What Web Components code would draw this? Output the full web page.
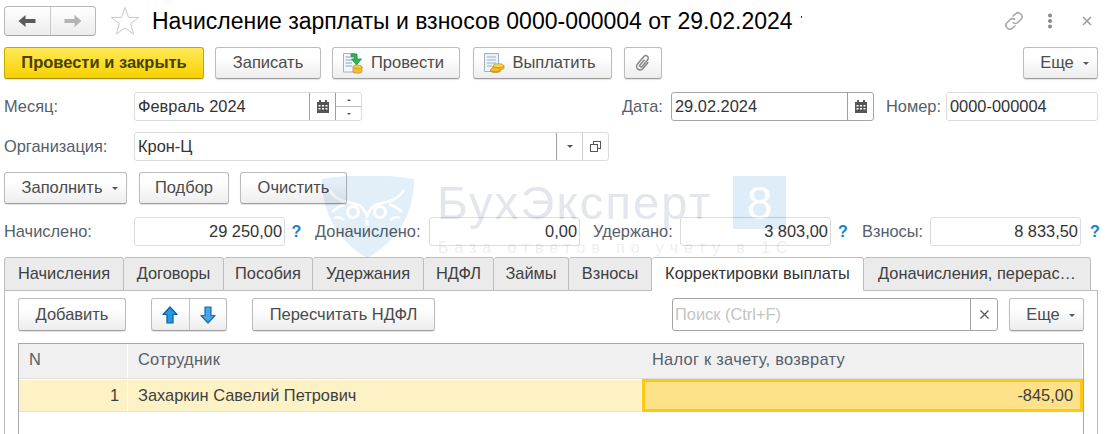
<!DOCTYPE html>
<html lang="ru">
<head>
<meta charset="utf-8">
<title>Начисление зарплаты и взносов</title>
<style>
  html, body { margin: 0; padding: 0; background: #fff; overflow: hidden; }
  body { font-family: "Liberation Sans", Arial, sans-serif; font-size: 16.4px; color: #4b4b4b; }
</style>
</head>
<body>

<form-window>
  <title-bar>Начисление зарплаты и взносов 0000-000004 от 29.02.2024</title-bar>

  <form-row h="32" top="0">
    <cmd-button primary w="200">Провести и закрыть</cmd-button>
    <cmd-button w="106" gap="11">Записать</cmd-button>
    <cmd-button w="128" gap="11" icon="post">Провести</cmd-button>
    <cmd-button w="139" gap="13" icon="pay">Выплатить</cmd-button>
    <cmd-button w="38" gap="12" icon="clip"></cmd-button>
    <cmd-button w="75" push menu>Еще</cmd-button>
  </form-row>

  <form-row h="29" top="13">
    <form-label w="130">Месяц:</form-label>
    <input-field w="228" value="Февраль 2024" actions="calendar spin"></input-field>
    <form-label gap="260" w="49">Дата:</form-label>
    <input-field w="203" dark value="29.02.2024" actions="calendar"></input-field>
    <form-label gap="12" w="60">Номер:</form-label>
    <input-field w="152" value="0000-000004"></input-field>
  </form-row>

  <form-row h="29" top="11">
    <form-label w="130">Организация:</form-label>
    <input-field w="475" value="Крон-Ц" actions="drop open"></input-field>
  </form-row>

  <form-row h="32" top="11">
    <cmd-button w="123" menu>Заполнить</cmd-button>
    <cmd-button w="90" gap="12">Подбор</cmd-button>
    <cmd-button w="107" gap="11">Очистить</cmd-button>
  </form-row>

  <form-row h="29" top="13">
    <form-label w="130">Начислено:</form-label>
    <input-field w="151" right value="29 250,00"></input-field>
    <help-mark w="23"></help-mark>
    <form-label gap="7" w="114">Доначислено:</form-label>
    <input-field w="151" right value="0,00"></input-field>
    <form-label gap="13" w="87">Удержано:</form-label>
    <input-field w="151" right value="3 803,00"></input-field>
    <help-mark w="24"></help-mark>
    <form-label gap="7" w="68">Взносы:</form-label>
    <input-field w="151" right value="8 833,50"></input-field>
    <help-mark w="28"></help-mark>
  </form-row>

  <tab-strip>
    <tab-item w="120">Начисления</tab-item>
    <tab-item w="100">Договоры</tab-item>
    <tab-item w="89">Пособия</tab-item>
    <tab-item w="111">Удержания</tab-item>
    <tab-item w="70">НДФЛ</tab-item>
    <tab-item w="75">Займы</tab-item>
    <tab-item w="83">Взносы</tab-item>
    <tab-item w="212" active>Корректировки выплаты</tab-item>
    <tab-item w="227">Доначисления, перерас…</tab-item>
  </tab-strip>

  <tab-panel>
    <form-row h="33" top="0" flush>
      <cmd-button w="108">Добавить</cmd-button>
      <arrow-group></arrow-group>
      <cmd-button w="183" gap="25">Пересчитать НДФЛ</cmd-button>
      <input-field w="326" gap="237" dark placeholder="Поиск (Ctrl+F)" actions="clear"></input-field>
      <cmd-button w="75" gap="11" menu>Еще</cmd-button>
    </form-row>
    <data-grid></data-grid>
  </tab-panel>

  <brand-mark></brand-mark>
</form-window>

<script>
const ICONS = {
  back: `<svg width="18" height="14" viewBox="0 0 18 14"><path d="M0.5 7 7.5 1V5H17.5V9H7.5V13Z" fill="#5a5a5a"/></svg>`,
  forward: `<svg width="18" height="14" viewBox="0 0 18 14"><path d="M17.5 7 10.5 1V5H0.5V9H10.5V13Z" fill="#b4b4b4"/></svg>`,
  star: `<svg width="30" height="30" viewBox="0 0 30 30"><path d="M15 1.5 18.6 11.4H28.8L20.7 17.7 23.6 28 15 21.9 6.400 28 9.300 17.700 1.200 11.400H11.400Z" fill="#fff" stroke="#c8c8c8" stroke-width="1"/></svg>`,
  link: `<svg width="20" height="20" viewBox="0 0 20 20" fill="none" stroke="#a9a9a9" stroke-width="1.600"><path d="M8.500 5.500 11.500 2.800C13 1.400 15.300 1.500 16.800 3 18.300 4.500 18.400 6.800 17 8.300L14 11.300C12.500 12.800 10.200 12.800 8.800 11.300"/><path d="M11.500 14.500 8.500 17.200C7 18.600 4.700 18.500 3.200 17 1.700 15.500 1.600 13.200 3 11.700L6 8.700C7.500 7.200 9.800 7.200 11.200 8.700"/></svg>`,
  dots: `<svg width="6" height="16" viewBox="0 0 6 16" fill="#8a8a8a"><circle cx="3" cy="2.500" r="2"/><circle cx="3" cy="8" r="2"/><circle cx="3" cy="13.500" r="2"/></svg>`,
  close: `<svg width="10" height="10" viewBox="0 0 10 10" stroke="#9a9a9a" stroke-width="1.500"><path d="M1 1 9 9M9 1 1 9"/></svg>`,
  calendar: `<svg width="12" height="13" viewBox="0 0 12 13"><path d="M0 2H12V13H0Z" fill="#555"/><path d="M2 0H4V3H2ZM8 0H10V3H8Z" fill="#555"/><path d="M1.500 5H3.500V6.500H1.500ZM5 5H7V6.500H5ZM8.500 5H10.500V6.500H8.500ZM1.500 8H3.500V9.500H1.500ZM5 8H7V9.500H5ZM8.500 8H10.500V9.500H8.500Z" fill="#fff"/></svg>`,
  clear: `<svg width="9" height="9" viewBox="0 0 9 9" stroke="#555" stroke-width="1.200"><path d="M.5 .5 8.500 8.500M8.500 .5 .5 8.500"/></svg>`,
  open: `<svg width="11" height="11" viewBox="0 0 11 11" fill="#fff" stroke="#555"><rect x="3.500" y=".5" width="7" height="7"/><rect x=".5" y="3.500" width="7" height="7"/></svg>`,
  clip: `<svg width="18" height="20" viewBox="0 0 18 20" fill="none" stroke="#858585" stroke-width="1.500"><path transform="rotate(40 9 10)" d="M12.500 6V14.500A3.500 3.500 0 0 1 5.500 14.500V4.500A2.500 2.500 0 0 1 10.500 4.500V13.500A1 1 0 0 1 8 13.500V6.500"/></svg>`,
  post: `<svg width="22" height="22" viewBox="0 0 22 22"><path d="M1.500 1.500H13L15 4V20H1.500Z" fill="#f4f7fb" stroke="#9fb0c4"/><path d="M3.500 5H11M3.500 8H10M3.500 11H10M3.500 14H10" stroke="#8ea2b8"/><path d="M9 2H15V7H19.500L14.500 13 9.500 7H12V4.500H9Z" fill="#2fb457" stroke="#1c8a3c" stroke-width=".7"/><ellipse cx="15.500" cy="15" rx="4.500" ry="2" fill="#f7cf4a" stroke="#c3941c" stroke-width=".7"/><path d="M11 15V20C11 21.500 20 21.500 20 20V15C20 16.600 11 16.600 11 15Z" fill="#f1bd32" stroke="#c3941c" stroke-width=".7"/></svg>`,
  pay: `<svg width="22" height="22" viewBox="0 0 22 22"><path d="M1.500 1.500H15.500V19.500H1.500Z" fill="#eef2f7" stroke="#9fb0c4"/><path d="M4 5H13M4 8H13M4 11H13M4 14H9" stroke="#9db0c4"/><ellipse cx="15.500" cy="14" rx="5.500" ry="2.300" fill="#f8d35a" stroke="#c3941c" stroke-width=".7"/><path d="M10 14V16.500C10 18 21 18 21 16.500V14C21 16 10 16 10 14Z" fill="#efb62d" stroke="#c3941c" stroke-width=".7"/><ellipse cx="12.500" cy="18" rx="5" ry="2.300" fill="#f1bd32" stroke="#c3941c" stroke-width=".7"/><path d="M7.500 18V19C7.500 20.800 17.500 20.800 17.500 19V18C17.500 20 7.500 20 7.500 18Z" fill="#dfa324" stroke="#c3941c" stroke-width=".7"/></svg>`,
  up: `<svg width="16" height="18" viewBox="0 0 16 18"><path d="M8 1 15 8.500H11V17H5V8.500H1Z" fill="#1f9ae8" stroke="#0e5e94" stroke-width="1.200" stroke-linejoin="round"/></svg>`,
  down: `<svg width="16" height="18" viewBox="0 0 16 18"><path d="M8 17 15 9.500H11V1H5V9.500H1Z" fill="#4aa3e6" stroke="#1c6ba5" stroke-width="1.200" stroke-linejoin="round"/></svg>`
};

customElements.define('form-window', class extends HTMLElement {
  constructor() {
    super();
    this.attachShadow({ mode: 'open' });
    this.shadowRoot.innerHTML = `<style>
      :host { display: flex; flex-direction: column; position: relative; width: 1108px; height: 434px; overflow: hidden; }
    </style><slot></slot>`;
  }
});

customElements.define('title-bar', class extends HTMLElement {
  constructor() {
    super();
    this.attachShadow({ mode: 'open' });
    this.shadowRoot.innerHTML = `<style>
      :host { display: flex; align-items: center; height: 47px; flex: none; padding: 0 16px 5px 4px; box-sizing: border-box; }
      .nav { display: flex; width: 92px; height: 30px; box-sizing: border-box; border: 1px solid #b9b9b9; border-bottom-color: #a5a5a5; border-radius: 4px; background: linear-gradient(#fff, #ececec); }
      .nav div { flex: 1; display: flex; align-items: center; justify-content: center; }
      .nav div + div { border-left: 1px solid #c8c8c8; }
      .star { margin-left: 14px; display: flex; }
      .text { margin-left: 12px; font-size: 23px; line-height: 26px; color: #000; white-space: nowrap; margin-top: -1px; }
      .tick { width: 1px; height: 2px; background: #b00; margin: 0 0 8px 8px; }
      .tools { margin-left: auto; display: flex; align-items: center; }
      .tools .dots { margin-left: 23px; display: flex; }
      .tools .close { margin-left: 29px; display: flex; }
    </style>
    <div class="nav"><div>${ICONS.back}</div><div>${ICONS.forward}</div></div>
    <div class="star">${ICONS.star}</div>
    <div class="text"><slot></slot></div>
    <div class="tick"></div>
    <div class="tools">${ICONS.link}<div class="dots">${ICONS.dots}</div><div class="close">${ICONS.close}</div></div>`;
  }
});

customElements.define('form-row', class extends HTMLElement {
  constructor() {
    super();
    this.attachShadow({ mode: 'open' });
    this.shadowRoot.innerHTML = `<style>
      :host { display: flex; align-items: stretch; flex: none; box-sizing: border-box; padding: 0 10px 0 4px; }
      :host([flush]) { padding: 0; }
    </style><slot></slot>`;
  }
  connectedCallback() {
    this.style.height = this.getAttribute('h') + 'px';
    this.style.marginTop = this.getAttribute('top') + 'px';
  }
});

customElements.define('cmd-button', class extends HTMLElement {
  constructor() {
    super();
    this.attachShadow({ mode: 'open' });
  }
  connectedCallback() {
    const icon = this.getAttribute('icon');
    const hasText = this.textContent.trim() !== '';
    const caret = this.hasAttribute('menu') ? `<span class="caret"></span>` : '';
    this.shadowRoot.innerHTML = `<style>
      :host { display: flex; flex: none; box-sizing: border-box; align-items: center; justify-content: center; padding-bottom: 1px; border: 1px solid #bcbcbc; border-bottom-color: #a0a0a0; border-radius: 3px; background: linear-gradient(#fff 30%, #ededed); box-shadow: 0 1px 1px rgba(0,0,0,.12); color: #4b4b4b; font-size: 16.5px; white-space: nowrap; }
      :host([primary]) { border-color: #c9a800; border-bottom-color: #a98f00; background: linear-gradient(#ffe957, #f6d200); color: #4a4000; font-weight: bold; }
      :host([push]) { margin-left: auto; }
      :host([menu]) { padding-left: 8px; }
      :host([icon]) { padding-right: ${hasText ? '6px' : '0'}; }
      .icon { display: flex; margin-right: ${hasText ? '7px' : '0'}; }
      .caret { width: 0; height: 0; border: 3px solid transparent; border-top-color: #555; border-bottom: 0; margin-left: 9px; margin-top: 2px; }
    </style>${icon ? `<span class="icon">${ICONS[icon]}</span>` : ''}<slot></slot>${caret}`;
    this.style.width = this.getAttribute('w') + 'px';
    if (this.hasAttribute('gap')) this.style.marginLeft = this.getAttribute('gap') + 'px';
  }
});

customElements.define('form-label', class extends HTMLElement {
  constructor() {
    super();
    this.attachShadow({ mode: 'open' });
    this.shadowRoot.innerHTML = `<style>
      :host { display: flex; flex: none; align-items: center; padding-bottom: 1px; box-sizing: border-box; color: #55606b; font-size: 16.4px; white-space: nowrap; }
    </style><slot></slot>`;
  }
  connectedCallback() {
    if (this.hasAttribute('w')) this.style.width = this.getAttribute('w') + 'px';
    if (this.hasAttribute('gap')) this.style.marginLeft = this.getAttribute('gap') + 'px';
  }
});

customElements.define('input-field', class extends HTMLElement {
  constructor() {
    super();
    this.attachShadow({ mode: 'open' });
  }
  connectedCallback() {
    const actions = (this.getAttribute('actions') || '').split(' ').filter(Boolean);
    const parts = actions.map(a => {
      if (a === 'spin') return `<div class="act spin"><i class="up"></i><i class="dn"></i></div>`;
      if (a === 'drop') return `<div class="act drop"><i class="dn"></i></div>`;
      return `<div class="act ${a}">${ICONS[a]}</div>`;
    }).join('');
    const value = this.getAttribute('value');
    const holder = this.getAttribute('placeholder');
    this.shadowRoot.innerHTML = `<style>
      :host { display: flex; flex: none; box-sizing: border-box; border: 1px solid #dcdcdc; border-radius: 3px; background: #fff; color: #333; font-size: 16.4px; }
      :host([dark]) { border-color: #a6a6a6; }
      .val { flex: 1; min-width: 0; display: flex; align-items: center; padding: 0 2px 1px 3px; white-space: nowrap; }
      :host([right]) .val { justify-content: flex-end; }
      .hold { color: #c4c4c4; margin-left: -1px; }
      .act { flex: none; display: flex; flex-direction: column; align-items: center; justify-content: center; width: 25px; border-left: 1px solid #9f9f9f; }
      .act.clear { width: 26px; }
      .act.open { width: 25px; border-left-color: #cfcfcf; }
      .spin i { flex: 1; display: flex; width: 100%; align-items: center; justify-content: center; }
      .spin i + i { border-top: 1px solid #bcbcbc; }
      i::after { content: ""; width: 0; height: 0; border: 2.500px solid transparent; }
      .up::after { border-top: 0; border-bottom-color: #555; }
      .dn::after { border-bottom: 0; border-top-color: #555; }
      .drop i { display: flex; }
      .drop i::after { border-width: 3px; border-bottom: 0; }
    </style><div class="val">${holder ? `<span class="hold">${holder}</span>` : value}</div>${parts}`;
    this.style.width = this.getAttribute('w') + 'px';
    if (this.hasAttribute('gap')) this.style.marginLeft = this.getAttribute('gap') + 'px';
  }
});

customElements.define('help-mark', class extends HTMLElement {
  constructor() {
    super();
    this.attachShadow({ mode: 'open' });
    this.shadowRoot.innerHTML = `<style>
      :host { display: flex; flex: none; align-items: center; justify-content: center; color: #1582c8; font-size: 16px; font-weight: bold; }
    </style>?`;
  }
  connectedCallback() {
    this.style.width = this.getAttribute('w') + 'px';
  }
});

customElements.define('tab-strip', class extends HTMLElement {
  constructor() {
    super();
    this.attachShadow({ mode: 'open' });
    this.shadowRoot.innerHTML = `<style>
      :host { display: flex; flex: none; height: 33px; margin: 11px 0 0 4px; position: relative; z-index: 1; }
    </style><slot></slot>`;
  }
});

customElements.define('tab-item', class extends HTMLElement {
  constructor() {
    super();
    this.attachShadow({ mode: 'open' });
    this.shadowRoot.innerHTML = `<style>
      :host { display: flex; flex: none; box-sizing: border-box; align-items: center; justify-content: center; height: 34px; padding-bottom: 1px; border: 1px solid #bdbdbd; border-left-width: 0; border-radius: 3px 3px 0 0; background: #ebebeb; color: #3f3f3f; font-size: 16.4px; white-space: nowrap; }
      :host(:first-child) { border-left-width: 1px; }
      :host([active]) { background: #fff; border-bottom-color: #fff; color: #333; }
    </style><slot></slot>`;
  }
  connectedCallback() {
    this.style.width = this.getAttribute('w') + 'px';
  }
});

customElements.define('tab-panel', class extends HTMLElement {
  constructor() {
    super();
    this.attachShadow({ mode: 'open' });
    this.shadowRoot.innerHTML = `<style>
      :host { display: block; flex: 1; box-sizing: border-box; width: 1094px; margin-left: 4px; padding: 7px 13px 0; border: 1px solid #bdbdbd; border-bottom: 0; }
    </style><slot></slot>`;
  }
});

customElements.define('arrow-group', class extends HTMLElement {
  constructor() {
    super();
    this.attachShadow({ mode: 'open' });
    this.shadowRoot.innerHTML = `<style>
      :host { display: flex; flex: none; box-sizing: border-box; width: 76px; margin-left: 25px; border: 1px solid #bcbcbc; border-bottom-color: #a0a0a0; border-radius: 3px; background: linear-gradient(#fff 30%, #ededed); box-shadow: 0 1px 1px rgba(0,0,0,.12); }
      div { flex: 1; display: flex; align-items: center; justify-content: center; }
      div + div { border-left: 1px solid #c4c4c4; }
    </style><div>${ICONS.up}</div><div>${ICONS.down}</div>`;
  }
});

customElements.define('data-grid', class extends HTMLElement {
  constructor() {
    super();
    this.attachShadow({ mode: 'open' });
    this.shadowRoot.innerHTML = `<style>
      :host { display: grid; grid-template-columns: 109px 514px 1fr; grid-template-rows: 35px 33px 60px; box-sizing: border-box; margin-top: 12px; border: 1px solid #a9a9a9; border-bottom: 0; font-size: 16.4px; color: #3f3f3f; }
      div { display: flex; align-items: center; box-sizing: border-box; padding: 0 10px; white-space: nowrap; }
      .head { background: #f0f0f0; color: #55606b; border-bottom: 1px solid #dedede; padding-bottom: 4px; letter-spacing: .28px; }
      .head, .row { border-right: 1px solid #fff; }
      .head:nth-child(3) { border-right: 0; }
      .row { background: #fdf2c6; border-bottom: 1px solid #e4e4e4; border-top: 1px solid #fff; }
      .num { justify-content: flex-end; padding-right: 8px; }
      .sel { justify-content: flex-end; background: #fde28a; border: 3px solid #fcc814; padding-right: 7px; }
    </style>
    <div class="head">N</div><div class="head">Сотрудник</div><div class="head">Налог к зачету, возврату</div>
    <div class="row num">1</div><div class="row">Захаркин Савелий Петрович</div><div class="sel">-845,00</div>`;
  }
});

customElements.define('brand-mark', class extends HTMLElement {
  constructor() {
    super();
    this.attachShadow({ mode: 'open' });
    this.shadowRoot.innerHTML = `<style>
      :host { display: block; position: absolute; left: 322px; top: 176px; width: 470px; height: 84px; pointer-events: none; mix-blend-mode: multiply; z-index: 2; }
      svg { position: absolute; left: 0; top: 0; }
      .name { position: absolute; left: 115px; top: 0; font-size: 47px; line-height: 54px; letter-spacing: 2.200px; color: #e4e6ee; white-space: nowrap; }
      .eight { position: absolute; left: 411px; top: 0; width: 53px; height: 53px; display: flex; align-items: center; justify-content: center; background: #deedf8; color: #fff; font-size: 46px; }
      .sub { position: absolute; left: 116px; top: 63px; font-size: 16px; line-height: 18px; letter-spacing: 5.900px; color: #eceef2; white-space: nowrap; }
    </style>
    <svg width="92" height="82" viewBox="0 0 92 82">
      <path d="M0 3C30 -2 62 -2 92 3 92 40 74 66 45 82 18 66 0 40 0 3Z" fill="#e3eff8"/>
      <g fill="none" stroke="#fff">
        <circle cx="31" cy="36" r="5.500" stroke-width="3"/>
        <circle cx="58" cy="36" r="5.500" stroke-width="3"/>
        <path d="M8 14C12 24 24 26 34 28 40 30 43 34 45 40 47 34 50 30 56 28 66 26 76 24 82 14" stroke-width="2.500"/>
        <path d="M10 36C14 32 18 30 23 28M12 42C16 40 19 42 22 44M80 36C76 32 72 30 67 28M78 42C74 40 71 42 68 44" stroke-width="2.500"/>
        <path d="M45 44V50" stroke-width="3"/>
      </g>
    </svg>
    <div class="name">БухЭксперт</div>
    <div class="eight">8</div>
    <div class="sub">База ответов по учёту в 1С</div>`;
  }
});
</script>
</body>
</html>
